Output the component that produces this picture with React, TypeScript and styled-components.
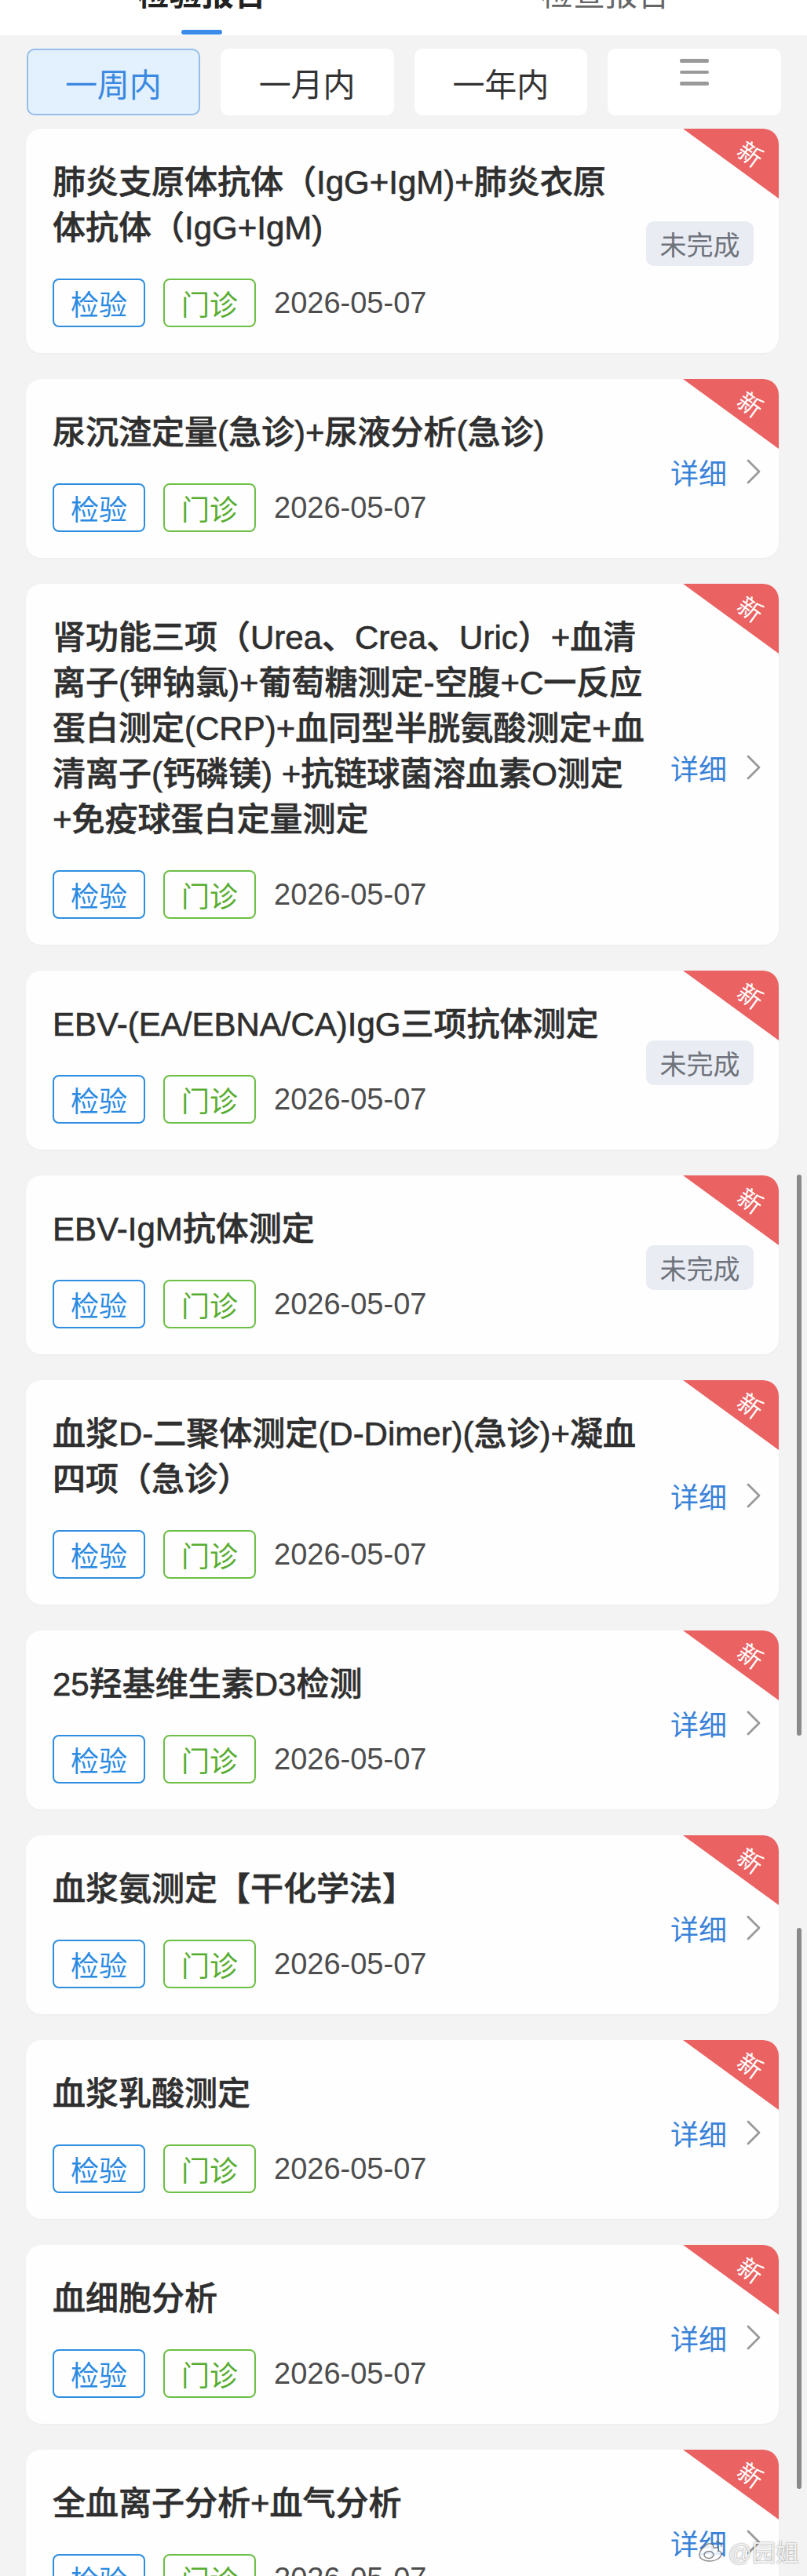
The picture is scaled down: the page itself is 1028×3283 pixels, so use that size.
import * as React from "react";
import styled, { createGlobalStyle } from "styled-components";

// report list data, lines are kept as shown on the device
const reports: { lines: string[]; pending?: boolean }[] = [
  { lines: ["肺炎支原体抗体（IgG+IgM)+肺炎衣原", "体抗体（IgG+IgM)"], pending: true },
  { lines: ["尿沉渣定量(急诊)+尿液分析(急诊)"] },
  {
    lines: [
      "肾功能三项（Urea、Crea、Uric）+血清",
      "离子(钾钠氯)+葡萄糖测定-空腹+C一反应",
      "蛋白测定(CRP)+血同型半胱氨酸测定+血",
      "清离子(钙磷镁) +抗链球菌溶血素O测定",
      "+免疫球蛋白定量测定",
    ],
  },
  { lines: ["EBV-(EA/EBNA/CA)IgG三项抗体测定"], pending: true },
  { lines: ["EBV-IgM抗体测定"], pending: true },
  { lines: ["血浆D-二聚体测定(D-Dimer)(急诊)+凝血", "四项（急诊）"] },
  { lines: ["25羟基维生素D3检测"] },
  { lines: ["血浆氨测定【干化学法】"] },
  { lines: ["血浆乳酸测定"] },
  { lines: ["血细胞分析"] },
  { lines: ["全血离子分析+血气分析"] },
];

const filters = ["一周内", "一月内", "一年内"];

export default function App(): JSX.Element {
  return (
    <Page>
      <GlobalStyle />
      <Header>
        <Tab>
          <TabLabel $active>检验报告</TabLabel>
          <TabIndicator />
        </Tab>
        <Tab>
          <TabLabel>检查报告</TabLabel>
        </Tab>
      </Header>

      <FilterRow>
        {filters.map((f, i) => (
          <FilterButton key={f} $active={i === 0}>
            {f}
          </FilterButton>
        ))}
        <MenuButton>
          <MenuBar />
          <MenuBar />
          <MenuBar />
        </MenuButton>
      </FilterRow>

      <List>
        {reports.map((r, i) => (
          <Card key={i}>
            <Ribbon>
              <RibbonText>新</RibbonText>
            </Ribbon>
            <CardMain>
              <Title>
                {r.lines.map((l) => (
                  <TitleLine key={l}>{l}</TitleLine>
                ))}
              </Title>
              <Meta>
                <Tag $tone="blue">检验</Tag>
                <Tag $tone="green">门诊</Tag>
                <DateText>2026-05-07</DateText>
              </Meta>
            </CardMain>
            {r.pending ? (
              <StatusBadge>未完成</StatusBadge>
            ) : (
              <DetailLink>
                详细
                <svg width="20" height="32" viewBox="0 0 20 32">
                  <path
                    d="M3 2 L17 16 L3 30"
                    fill="none"
                    stroke="#999999"
                    strokeWidth="2.8"
                    strokeLinecap="round"
                    strokeLinejoin="round"
                  />
                </svg>
              </DetailLink>
            )}
          </Card>
        ))}
      </List>

      <ScrollThumb style={{ top: 1497 }} />
      <ScrollThumb style={{ top: 2457 }} />

      <Watermark>
        <svg width="34" height="30" viewBox="0 0 34 30">
          <path
            d="M14 6c-6 3-11 9-11 14 0 5 6 8 13 8 9 0 15-5 15-9 0-3-3-4-4-4 1-3 0-5-4-4-2 1-2 0-2-1 0-3-3-5-7-4z"
            fill="rgba(255,255,255,0.85)"
            stroke="rgba(90,90,90,0.7)"
            strokeWidth="1.5"
          />
          <ellipse cx="15" cy="20" rx="6" ry="4.5" fill="none" stroke="rgba(90,90,90,0.7)" strokeWidth="1.5" />
          <path d="M24 3c4 0 7 3 7 7" fill="none" stroke="rgba(90,90,90,0.7)" strokeWidth="1.5" />
        </svg>
        <span>@园姐</span>
      </Watermark>
    </Page>
  );
}

const GlobalStyle = createGlobalStyle`
  html, body {
    margin: 0;
    padding: 0;
    background: #f3f3f3;
  }
  body {
    font-family: "Liberation Sans", "Noto Sans CJK SC", sans-serif;
  }
`;

const Page = styled.div`
  position: relative;
  height: 3283px;
  overflow: hidden;
  background: #f3f3f3;
`;

const Header = styled.div`
  display: grid;
  grid-template-columns: 1fr 1fr;
  height: 45px;
  background: #ffffff;
`;

const Tab = styled.div`
  display: flex;
  flex-direction: column;
  align-items: center;
`;

const TabLabel = styled.div<{ $active?: boolean }>`
  margin-top: -27px;
  font-size: 41px;
  line-height: 41px;
  font-weight: ${(p) => (p.$active ? 700 : 400)};
  color: ${(p) => (p.$active ? "#222222" : "#666666")};
`;

const TabIndicator = styled.div`
  margin-top: auto;
  margin-bottom: 1px;
  width: 52px;
  height: 6px;
  border-radius: 3px;
  background: #3b8bea;
`;

const FilterRow = styled.div`
  display: grid;
  grid-template-columns: repeat(4, 1fr);
  gap: 26px;
  padding: 17px 33px 0 34px;
`;

const FilterButton = styled.div<{ $active?: boolean }>`
  height: 85px;
  box-sizing: border-box;
  display: flex;
  align-items: center;
  justify-content: center;
  border-radius: 10px;
  font-size: 41px;
  color: ${(p) => (p.$active ? "#3a88e0" : "#333333")};
  background: ${(p) => (p.$active ? "#e3f0fd" : "#ffffff")};
  border: 2px solid ${(p) => (p.$active ? "#94bfea" : "#ffffff")};
`;

const MenuButton = styled.div`
  height: 85px;
  display: flex;
  flex-direction: column;
  align-items: center;
  gap: 10px;
  padding-top: 13px;
  box-sizing: border-box;
  border-radius: 10px;
  background: #ffffff;
`;

const MenuBar = styled.div`
  width: 37px;
  height: 4.5px;
  border-radius: 2px;
  background: #9a9a9a;
`;

const List = styled.div`
  display: flex;
  flex-direction: column;
  gap: 33px;
  padding: 17px 36px 0 33px;
`;

const Card = styled.div`
  position: relative;
  overflow: hidden;
  display: flex;
  align-items: center;
  padding: 40px 22px 33px 34px;
  border-radius: 20px;
  background: #fefefe;
  box-shadow: 0 1px 3px rgba(0, 0, 0, 0.03);
`;

const Ribbon = styled.div`
  position: absolute;
  top: 0;
  right: 0;
  width: 122px;
  height: 89px;
  background: #ea6262;
  clip-path: polygon(0 0, 100% 0, 100% 100%);
`;

const RibbonText = styled.span`
  position: absolute;
  left: 87px;
  top: 31px;
  transform: translate(-50%, -50%) rotate(36deg);
  font-family: "Noto Sans CJK SC", sans-serif;
  font-size: 31px;
  line-height: 1;
  color: #ffffff;
`;

const CardMain = styled.div`
  flex: 1;
  min-width: 0;
`;

const Title = styled.div`
  font-size: 42px;
  line-height: 58px;
  font-weight: 500;
  color: #2f2f2f;
  -webkit-text-stroke: 0.6px #2f2f2f;
`;

const TitleLine = styled.span`
  display: block;
  white-space: nowrap;
`;

const Meta = styled.div`
  display: flex;
  align-items: center;
  gap: 23px;
  margin-top: 35px;
`;

const Tag = styled.span<{ $tone: "blue" | "green" }>`
  height: 62px;
  box-sizing: border-box;
  display: inline-flex;
  align-items: center;
  padding: 0 21px;
  border-radius: 8px;
  font-size: 36px;
  border: 2px solid ${(p) => (p.$tone === "blue" ? "#2f8ee0" : "#6dbf45")};
  color: ${(p) => (p.$tone === "blue" ? "#2a8ae2" : "#57ad30")};
`;

const DateText = styled.span`
  font-size: 38px;
  color: #4d4d4d;
`;

const StatusBadge = styled.span`
  flex-shrink: 0;
  width: 137px;
  height: 57px;
  margin-right: 10px;
  display: flex;
  align-items: center;
  justify-content: center;
  border-radius: 10px;
  background: #e9ecf3;
  font-size: 34px;
  color: #6f737b;
`;

const DetailLink = styled.span`
  flex-shrink: 0;
  display: flex;
  align-items: center;
  gap: 24px;
  font-size: 36px;
  color: #3a82d8;
`;

const ScrollThumb = styled.div`
  position: absolute;
  left: 1015px;
  width: 6px;
  height: 715px;
  border-radius: 3px;
  background: #8a8a8a;
`;

const Watermark = styled.div`
  position: absolute;
  right: 10px;
  bottom: 10px;
  display: flex;
  align-items: center;
  gap: 6px;
  font-size: 30px;
  color: rgba(255, 255, 255, 0.9);
  text-shadow: 0 0 2px rgba(0, 0, 0, 0.55);
`;
